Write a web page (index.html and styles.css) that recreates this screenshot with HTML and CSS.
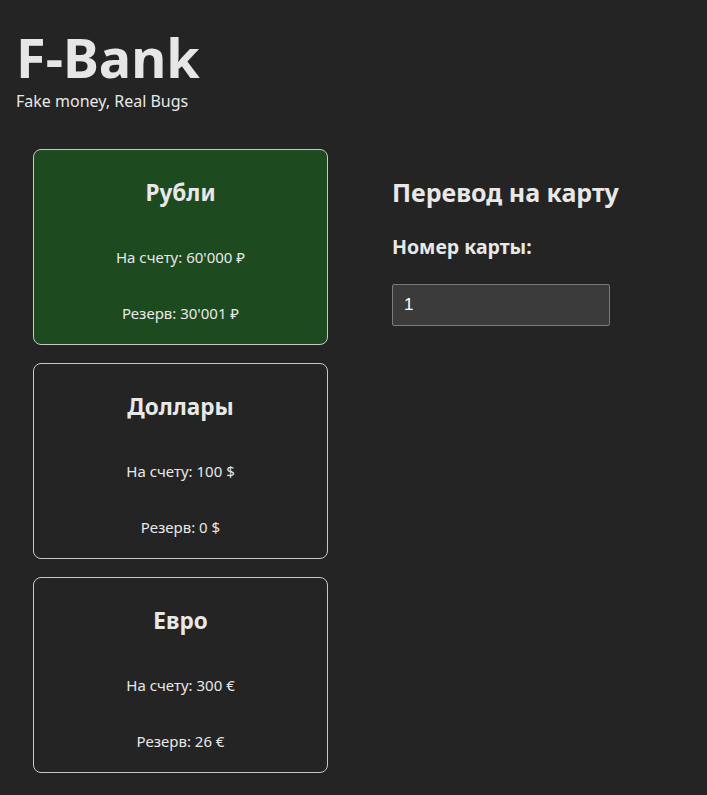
FILE: index.html
```html
<!DOCTYPE html>
<html lang="ru">
<head>
<meta charset="utf-8">
<title>F-Bank</title>
<link rel="stylesheet" href="styles.css">
</head>
<body>
<header class="header">
  <h1 class="logo">F-Bank</h1>
  <div class="tagline">Fake money, Real Bugs</div>
</header>
<main class="main">
  <section class="accounts">
    <div class="card card-active">
      <h2 class="card-title">Рубли</h2>
      <p class="card-line first">На счету: 60'000 ₽</p>
      <p class="card-line second">Резерв: 30'001 ₽</p>
    </div>
    <div class="card">
      <h2 class="card-title">Доллары</h2>
      <p class="card-line first">На счету: 100 $</p>
      <p class="card-line second">Резерв: 0 $</p>
    </div>
    <div class="card">
      <h2 class="card-title">Евро</h2>
      <p class="card-line first">На счету: 300 €</p>
      <p class="card-line second">Резерв: 26 €</p>
    </div>
  </section>
  <section class="transfer">
    <h2 class="transfer-title">Перевод на карту</h2>
    <label class="field-label" for="card">Номер карты:</label>
    <input class="field-input" id="card" type="text" value="1">
  </section>
</main>
</body>
</html>
```
FILE: styles.css
```css
* { box-sizing: border-box; }
html, body { margin: 0; padding: 0; }
body {
  background: #242424;
  color: #e8e8e8;
  font-family: "Noto Sans", "Open Sans", sans-serif;
  min-height: 795px;
}
.header {
  padding: 32px 0 0 16px;
}
.logo {
  margin: 0;
  font-size: 54px;
  line-height: 50px;
  font-weight: 700;
  color: #e6e6e6;
}
.tagline {
  margin-top: 9px;
  font-size: 16px;
  line-height: 20px;
}
.main {
  display: flex;
  gap: 64px;
  padding: 38px 0 0 33px;
}
.accounts {
  display: flex;
  flex-direction: column;
  gap: 18px;
  width: 295px;
}
.card {
  height: 196px;
  border: 1px solid #c8c8c8;
  border-radius: 8px;
  display: flex;
  flex-direction: column;
  align-items: center;
}
.card-active {
  background: #1e4a20;
}
.card-title {
  margin: 28px 0 0;
  font-size: 22.5px;
  line-height: 30px;
  font-weight: 700;
}
.card-line {
  margin: 0;
  font-size: 15px;
  line-height: 20px;
}
.card-line.first { margin-top: 39px; }
.card-line.second { margin-top: 36px; }
.transfer {
  display: flex;
  flex-direction: column;
  align-items: flex-start;
}
.transfer-title {
  margin: 28px 0 0;
  font-size: 25px;
  line-height: 30px;
  font-weight: 700;
}
.field-label {
  margin-top: 28px;
  font-size: 19.5px;
  line-height: 24px;
  font-weight: 700;
}
.field-input {
  margin-top: 25px;
  width: 218px;
  height: 42px;
  background: #3b3b3b;
  border: 1px solid #7a7a7a;
  border-radius: 2px;
  color: #ffffff;
  font-family: "Liberation Sans", Arial, sans-serif;
  font-size: 17px;
  padding: 0 11px;
}
```
